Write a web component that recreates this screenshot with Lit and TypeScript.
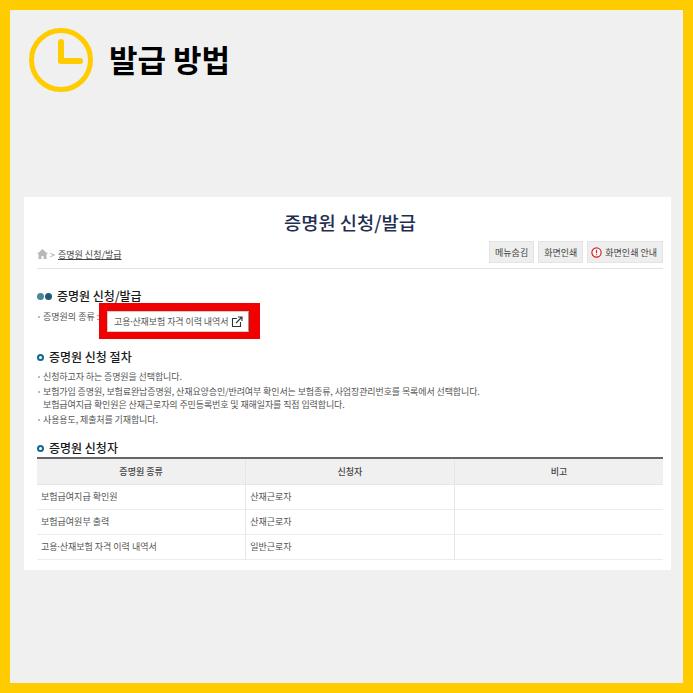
import { LitElement, html, css } from "lit";
import { customElement } from "lit/decorators.js";

const rows = [
  ["보험급여지급 확인원", "산재근로자"],
  ["보험급여원부 출력", "산재근로자"],
];

@customElement("app-root")
export class AppRoot extends LitElement {
  static styles = css`
    :host {
      display: block;
      width: 693px;
      height: 693px;
      font-family: "Noto Sans CJK KR", "Noto Sans", sans-serif;
    }
    * {
      box-sizing: border-box;
    }
    .frame {
      height: 693px;
      border: 10px solid #ffcc00;
      background: #f0f0f0;
      padding: 18px 12px 0 14px;
    }
    .head {
      display: flex;
      align-items: center;
      gap: 16px;
      margin-left: 5px;
      height: 64px;
    }
    .head svg {
      display: block;
    }
    .head h1 {
      margin: 0 0 3px;
      font-size: 31px;
      line-height: 40px;
      font-weight: 700;
      color: #000;
    }
    .card {
      background: #fff;
      margin-top: 105px;
      height: 373px;
      padding: 0 8px 0 13px;
    }
    .title {
      margin: 0;
      padding-top: 12px;
      height: 43px;
      font-size: 18.7px;
      line-height: 26px;
      font-weight: 500;
      text-align: center;
      color: #1f2f50;
    }
    .crumbbar {
      display: flex;
      align-items: flex-end;
      justify-content: space-between;
      height: 29px;
      border-bottom: 1px solid #e2e2e2;
    }
    .crumbs {
      display: flex;
      align-items: center;
      gap: 2px;
      height: 22px;
      margin-bottom: 3px;
      font-size: 9px;
      color: #444;
    }
    .crumbs u {
      margin-left: 1px;
    }
    .crumbs .gt {
      color: #999;
    }
    .tools {
      display: flex;
      gap: 4px;
      margin-bottom: 5px;
    }
    .tool {
      display: flex;
      align-items: center;
      gap: 2px;
      height: 22px;
      padding: 0 5px;
      background: #eeeeee;
      border: 1px solid #e4e4e4;
      font-size: 9px;
      color: #444;
      white-space: nowrap;
    }
    .tool.info {
      padding: 0 5px 0 3px;
      gap: 3px;
    }
    .sec {
      display: flex;
      align-items: center;
      gap: 5px;
      margin: 0;
      font-size: 12px;
      line-height: 16px;
      font-weight: 500;
      color: #1a1a1a;
    }
    .sec.first {
      margin-top: 19px;
    }
    .dots {
      display: flex;
      gap: 1px;
    }
    .dots i {
      width: 7px;
      height: 7px;
      border-radius: 50%;
      background: #4a8796;
    }
    .dots i + i {
      background: #1f5a78;
    }
    .ring {
      width: 7px;
      height: 7px;
      border-radius: 50%;
      border: 2px solid #0f6a8f;
    }
    .kind {
      position: relative;
      display: flex;
      align-items: flex-start;
      height: 27px;
      font-size: 9px;
      line-height: 13px;
      color: #555;
    }
    .kind .label {
      width: 70px;
      flex: none;
      margin-top: 6px;
    }
    .bullet {
      padding-left: 6px;
      position: relative;
    }
    .bullet::before {
      content: "";
      position: absolute;
      left: 1px;
      top: 6px;
      width: 2px;
      height: 2px;
      background: #bbb;
    }
    .linkbtn {
      display: flex;
      align-items: center;
      gap: 3px;
      width: 142px;
      height: 21px;
      margin-top: 7px;
      padding-left: 6px;
      border: 1px solid #cfcfcf;
      border-right-color: #999;
      background: #fff;
      color: #555;
      letter-spacing: -0.08px;
      white-space: nowrap;
    }
    .middot {
      margin: 0 -1.5px;
    }
    .mark {
      position: absolute;
      left: 62px;
      top: -1px;
      width: 161px;
      height: 36px;
      border-style: solid;
      border-color: #f00000;
      border-width: 8px 11px 7px 8px;
      pointer-events: none;
    }
    .steps {
      margin: 5px 0 0;
      padding: 0;
      list-style: none;
      font-size: 9px;
      line-height: 13px;
      letter-spacing: -0.11px;
      color: #555;
    }
    .steps li {
      margin-bottom: 2px;
    }
    .sec.proc {
      margin-top: 18px;
    }
    .sec.who {
      margin-top: 14px;
    }
    table {
      width: 626px;
      margin-top: 1px;
      border-collapse: collapse;
      table-layout: fixed;
      border-top: 2px solid #666;
      font-size: 9px;
      color: #555;
    }
    th {
      height: 26px;
      padding: 0;
      background: #f0f0f0;
      font-weight: 500;
      color: #444;
      border-bottom: 1px solid #e6e6e6;
      border-right: 1px solid #e6e6e6;
    }
    td {
      height: 25px;
      padding: 0 4px;
      border-bottom: 1px solid #ececec;
      border-right: 1px solid #e6e6e6;
    }
    th:last-child,
    td:last-child {
      border-right: 0;
    }
  `;

  private jobName() {
    return html`고용<span class="middot">·</span>산재보험 자격 이력 내역서`;
  }

  render() {
    return html`<div class="frame">
      <div class="head">
        <svg width="64" height="64" viewBox="0 0 64 64">
          <circle cx="32" cy="32" r="29.5" fill="none" stroke="#ffcc00" stroke-width="5" />
          <path d="M32 14V33H51" fill="none" stroke="#ffcc00" stroke-width="6" stroke-linecap="round" stroke-linejoin="round" />
        </svg>
        <h1>발급 방법</h1>
      </div>
      <div class="card">
        <h2 class="title">증명원 신청/발급</h2>
        <div class="crumbbar">
          <div class="crumbs">
            <svg width="11" height="10" viewBox="0 0 11 10">
              <path d="M5.5 0L11 5H9.5V10H6.5V7H4.5V10H1.5V5H0Z" fill="#b9b9b9" />
            </svg>
            <span class="gt">&gt;</span>
            <u>증명원 신청/발급</u>
          </div>
          <div class="tools">
            <span class="tool">메뉴숨김</span>
            <span class="tool">화면인쇄</span>
            <span class="tool info">
              <svg width="11" height="11" viewBox="0 0 11 11">
                <circle cx="5.5" cy="5.5" r="4.6" fill="#fff" stroke="#d8232a" stroke-width="1.2" />
                <path d="M5.5 2.8V6.2M5.5 7.3V8.3" stroke="#d8232a" stroke-width="1.2" />
              </svg>
              화면인쇄 안내
            </span>
          </div>
        </div>
        <h3 class="sec first"><span class="dots"><i></i><i></i></span>증명원 신청/발급</h3>
        <div class="kind">
          <span class="label bullet">증명원의 종류 :</span>
          <span class="linkbtn">
            <span>${this.jobName()}</span>
            <svg width="12" height="12" viewBox="0 0 12 12" fill="none" stroke="#333" stroke-width="1.1">
              <path d="M6 2.5H1.5V10.5H9.5V6" />
              <path d="M5 7L10.5 1.5M7 1H11V5" />
            </svg>
          </span>
          <span class="mark"></span>
        </div>
        <h3 class="sec proc"><span class="ring"></span>증명원 신청 절차</h3>
        <ul class="steps">
          <li class="bullet">신청하고자 하는 증명원을 선택합니다.</li>
          <li class="bullet">
            보험가입 증명원, 보험료완납증명원, 산재요양승인/반려여부 확인서는 보험종류, 사업장관리번호를 목록에서 선택합니다.<br />
            보험급여지급 확인원은 산재근로자의 주민등록번호 및 재해일자를 직접 입력합니다.
          </li>
          <li class="bullet">사용용도, 제출처를 기재합니다.</li>
        </ul>
        <h3 class="sec who"><span class="ring"></span>증명원 신청자</h3>
        <table>
          <thead>
            <tr><th>증명원 종류</th><th>신청자</th><th>비고</th></tr>
          </thead>
          <tbody>
            ${rows.map((r) => html`<tr><td>${r[0]}</td><td>${r[1]}</td><td></td></tr>`)}
            <tr><td>${this.jobName()}</td><td>일반근로자</td><td></td></tr>
          </tbody>
        </table>
      </div>
    </div>`;
  }
}
